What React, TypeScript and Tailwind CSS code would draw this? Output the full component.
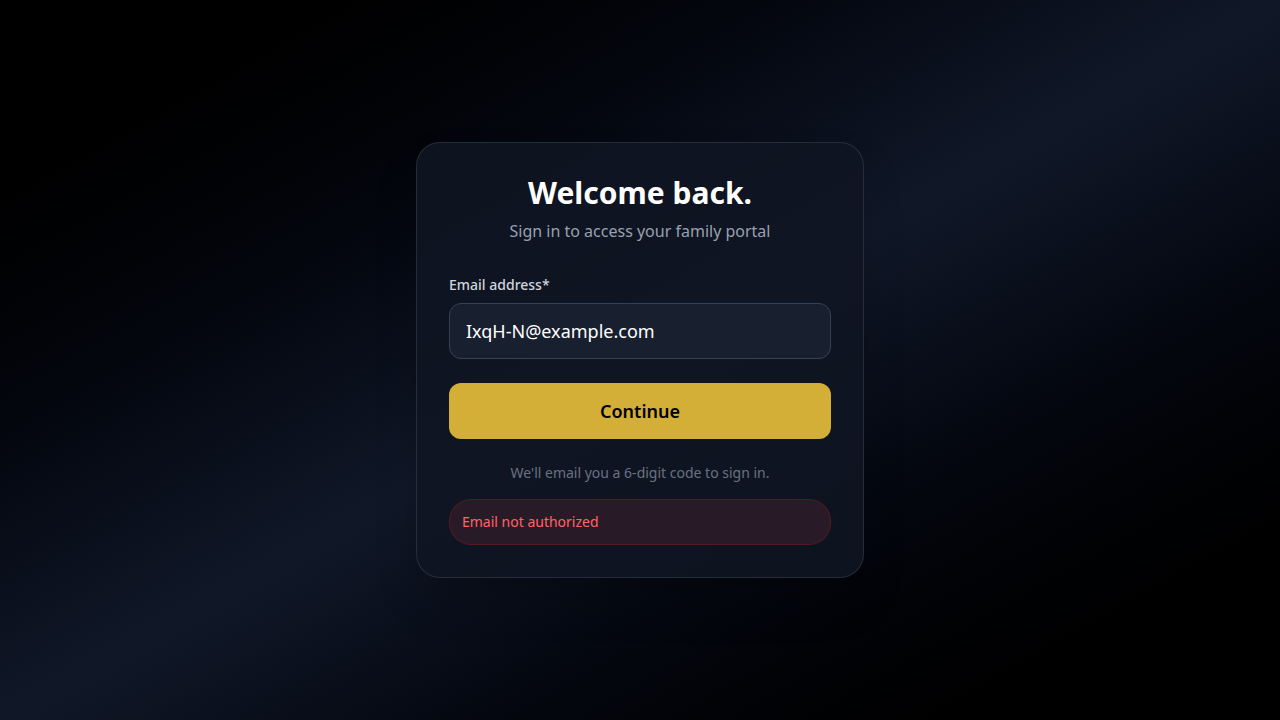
import { useState } from "react";

export default function App() {
  const [email, setEmail] = useState("IxqH-N@example.com");

  return (
    <main
      className="min-h-screen flex items-center justify-center bg-gradient-to-br from-black via-gray-900 to-black px-4"
      style={{ fontFamily: '"Noto Sans", "Open Sans", sans-serif' }}
    >
      <section className="w-full max-w-md rounded-3xl border border-white/10 bg-[#0f1522]/90 p-8 shadow-2xl">
        <div className="mb-8 text-center">
          <h1 className="text-3xl font-bold text-white">Welcome back.</h1>
          <p className="mt-2 text-base text-gray-400">Sign in to access your family portal</p>
        </div>

        <label htmlFor="email" className="mb-2 block text-sm font-medium text-gray-300">
          Email address*
        </label>
        <input
          id="email"
          type="email"
          value={email}
          onChange={(e) => setEmail(e.target.value)}
          className="block h-14 w-full rounded-xl border border-gray-700 bg-[#182030] px-4 text-lg text-white outline-none focus:border-gray-500"
        />

        <button className="mt-6 h-14 w-full rounded-xl bg-[#d4af37] text-lg font-semibold text-black hover:bg-[#dcb942] transition">
          Continue
        </button>

        <p className="mt-6 text-center text-sm text-gray-500">We'll email you a 6-digit code to sign in.</p>

        <div className="mt-4 rounded-[22px] border border-red-900/50 bg-[#281a26] px-3 py-3 text-sm text-red-400">
          Email not authorized
        </div>
      </section>
    </main>
  );
}
